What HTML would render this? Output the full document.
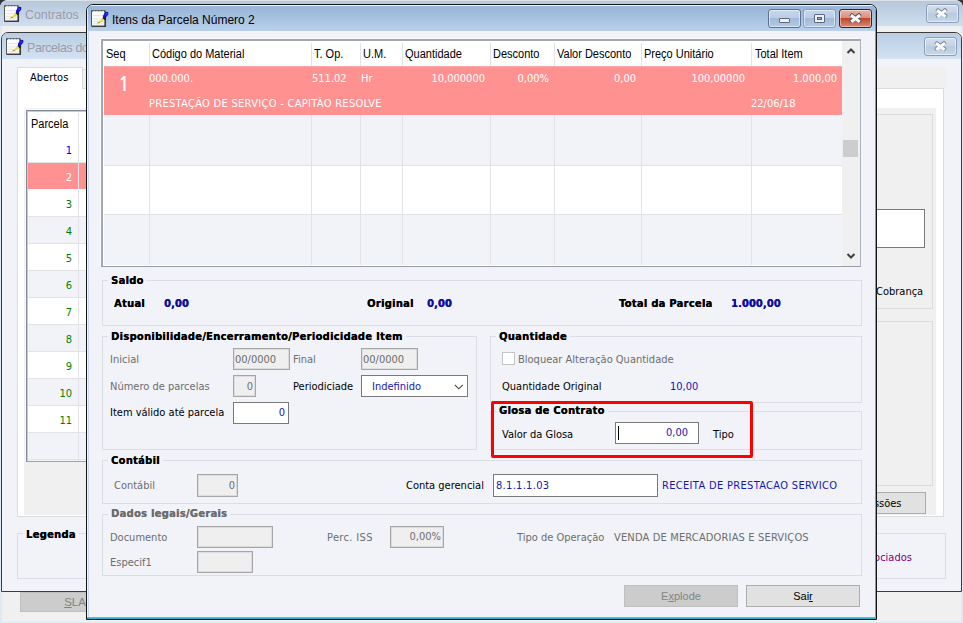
<!DOCTYPE html>
<html lang="pt-BR">
<head>
<meta charset="utf-8">
<title>Itens da Parcela Número 2</title>
<style>
html,body{margin:0;padding:0;}
body{width:963px;height:623px;overflow:hidden;position:relative;background:#33363c;
  font-family:"DejaVu Sans Condensed","Liberation Sans",sans-serif;font-size:11px;color:#000;}
*{box-sizing:border-box;}
.a{position:absolute;white-space:nowrap;}
.t{position:absolute;white-space:nowrap;line-height:14px;height:14px;}
.b{font-weight:bold;letter-spacing:0.3px;text-shadow:.3px 0 0 currentColor;}
.ms{font-family:"Liberation Sans",sans-serif;font-size:12.5px;transform:scaleX(.88);transform-origin:0 50%;}
.seg{font-family:"Liberation Sans",sans-serif;font-size:12px;}
.blue{color:#1616b0;}
.b.blue{letter-spacing:0.1px;color:#0e0e9c;}
.gray{color:#6d6d6d;}
.r{text-align:right;}
/* outer window */
#w1{left:0;top:0;width:963px;height:623px;background:#dfe9f5;border-radius:8px 8px 0 0;overflow:hidden;}
#w1t{left:0;top:0;width:963px;height:26px;background:linear-gradient(#b7c8dc,#cfdff0);border-top:1px solid #dde2e9;border-top-left-radius:7px;border-top-right-radius:7px;}
#w1m{left:2px;top:26px;width:959px;height:596px;background:#f0f0f0;}
/* second window */
#w2{left:1px;top:32px;width:961px;height:560px;background:#f1f3f9;border:1px solid #3c3c3c;border-radius:7px 7px 0 0;overflow:hidden;}
#w2t{left:0;top:0;width:959px;height:26px;background:linear-gradient(#b9cde3,#d3e2f2);}
.cb2{background:linear-gradient(#c5d6eb,#bacee6 48%,#a0bad9 50%,#b4cbe5) !important;border-color:#8397b8;}
.cbtn{border:1px solid #8e9cbb;border-radius:3px;background:linear-gradient(#d2deec,#c3d2e5 50%,#b9cbe0 50%,#c8d7e8);box-shadow:inset 0 0 0 1px rgba(255,255,255,.5);}
/* dialog */
#dlg{left:86px;top:4px;width:791px;height:616px;background:#f1f3f9;border:1px solid #141414;border-radius:7px 7px 0 0;overflow:hidden;}
#dlgt{left:0;top:0;width:789px;height:26px;background:linear-gradient(#98b4d6 0%,#a7c2e1 50%,#b9d1ec 100%);border-top:1px solid #eef3f9;border-left:1px solid #dfeaf6;}
.gb{position:absolute;border:1px solid #dcdee6;}
.gl{position:absolute;white-space:nowrap;line-height:14px;height:14px;background:#f1f3f9;padding:0 3px 0 3px;font-weight:bold;letter-spacing:0.3px;text-shadow:.3px 0 0 currentColor;}
.in{position:absolute;border:1px solid #7a7a7a;background:#fff;line-height:18px;padding:0 3px;white-space:nowrap;overflow:hidden;}
.dis{background:#efefef;border:1px solid #a6a6a6;box-shadow:inset 0 0 0 1px #dcdcdc;color:#6d6d6d;}
.btn{position:absolute;border:1px solid #adadad;background:#e1e1e1;text-align:center;line-height:20px;font-family:"Liberation Sans",sans-serif;font-size:11px;}
.x{position:absolute;width:12px;height:10px;}
.x i{position:absolute;left:50%;top:50%;display:block;}
.x .o{width:12.6px;height:4.4px;margin:-2.2px 0 0 -6.3px;background:currentColor;border-radius:1px;}
.x .w{width:10.8px;height:2.6px;margin:-1.3px 0 0 -5.4px;background:#fbfbfb;}
.x .r1{transform:rotate(37deg);}
.x .r2{transform:rotate(-37deg);}
.vl{position:absolute;width:1px;background:#e3e3e6;}
.hl{position:absolute;height:1px;background:#e3e3e6;}
</style>
</head>
<body>
<div class="a" id="w1">
  <div class="a" id="w1t"></div>
  <div class="a" id="w1m"></div>
  <svg class="a" style="left:4px;top:5px" width="18" height="18" viewBox="0 0 18 18"><rect x="0.5" y="0.8" width="13.6" height="15.4" fill="#fbfbfb" stroke="#555" stroke-width="1"/><path d="M1 1h13" stroke="#444" stroke-width="1.2" stroke-dasharray="1.2 1.8"/><path d="M2 2.3h11" stroke="#fff" stroke-width="1.4"/><path d="M1.5 5.6h12M1.5 8.8h12M1.5 11.4h12M1.5 13.8h12" stroke="#e4e4e4" stroke-width="1"/><path d="M14.3 1.5V16.6" stroke="#3c3c3c" stroke-width="1.5"/><path d="M1 16.4h14" stroke="#3c3c3c" stroke-width="1.3"/><path d="M5.8 13.6L11.6 8.2l2 1.9-4.6 2.6z" fill="#e6df3c"/><path d="M5.8 13.6l2.4-1.9 1 .9z" fill="#8c8a2a"/><path d="M11.4 8l1.5-1.7 2.4 2.1-1.5 1.8z" fill="#1c1c24"/><ellipse cx="14.7" cy="4.8" rx="3.5" ry="1.9" transform="rotate(-52 14.7 4.8)" fill="#1212d6"/><ellipse cx="15.2" cy="4.2" rx="1.4" ry="0.7" transform="rotate(-52 15.2 4.2)" fill="#3a3af0"/></svg>
  <div class="t seg" style="left:25px;top:8px;color:#9b9ba6;font-size:12.4px">Contratos</div>
  <div class="a cbtn" style="left:926px;top:4px;width:33px;height:19px"></div>
  <div class="x" style="left:935px;top:8px;color:#7f899f"><i class="o r1"></i><i class="o r2"></i><i class="w r1"></i><i class="w r2"></i></div>
  <div class="btn" style="left:20px;top:592px;width:110px;height:20px;line-height:18px;background:#cccccc;border-color:#bfbfbf;color:#838383;font-size:11.5px"><u>S</u>LA</div>
</div>

<div class="a" id="w2">
  <div class="a" id="w2t"></div>
  <svg class="a" style="left:4px;top:5px" width="18" height="18" viewBox="0 0 18 18"><rect x="0.5" y="0.8" width="13.6" height="15.4" fill="#fbfbfb" stroke="#555" stroke-width="1"/><path d="M1 1h13" stroke="#444" stroke-width="1.2" stroke-dasharray="1.2 1.8"/><path d="M2 2.3h11" stroke="#fff" stroke-width="1.4"/><path d="M1.5 5.6h12M1.5 8.8h12M1.5 11.4h12M1.5 13.8h12" stroke="#e4e4e4" stroke-width="1"/><path d="M14.3 1.5V16.6" stroke="#3c3c3c" stroke-width="1.5"/><path d="M1 16.4h14" stroke="#3c3c3c" stroke-width="1.3"/><path d="M5.8 13.6L11.6 8.2l2 1.9-4.6 2.6z" fill="#e6df3c"/><path d="M5.8 13.6l2.4-1.9 1 .9z" fill="#8c8a2a"/><path d="M11.4 8l1.5-1.7 2.4 2.1-1.5 1.8z" fill="#1c1c24"/><ellipse cx="14.7" cy="4.8" rx="3.5" ry="1.9" transform="rotate(-52 14.7 4.8)" fill="#1212d6"/><ellipse cx="15.2" cy="4.2" rx="1.4" ry="0.7" transform="rotate(-52 15.2 4.2)" fill="#3a3af0"/></svg>
  <div class="t seg" style="left:25px;top:8px;color:#9b9ba6;font-size:12.4px;letter-spacing:-.35px">Parcelas do Contrato</div>
  <div class="a cbtn" style="left:922px;top:4px;width:33px;height:19px"></div>
  <div class="x" style="left:932px;top:8px;color:#7f899f"><i class="o r1"></i><i class="o r2"></i><i class="w r1"></i><i class="w r2"></i></div>
  <!-- tab control -->
  <div class="a" style="left:80px;top:36px;width:700px;height:20px;background:#f0f0f0;border:1px solid #d9d9d9"></div>
  <div class="a" style="left:800px;top:34px;width:145px;height:22px;background:#f0f0f0"></div>
  <div class="a" style="left:15px;top:55px;width:927px;height:429px;background:#fff;border:1px solid #dcdcdc"></div>
  <div class="a" style="left:15px;top:34px;width:66px;height:22px;background:#fff;border:1px solid #dcdcdc;border-bottom:none"></div>
  <div class="t" style="left:28px;top:38px">Abertos</div>
  <div class="a" style="left:22px;top:75px;width:912px;height:407px;background:#f0f0f0"></div>
  <!-- parcela grid -->
  <div class="a" style="left:24px;top:77px;width:840px;height:352px;background:#fff;border:1px solid #838b99;border-right-color:#cfd2da;border-bottom-color:#9ba1ad;box-shadow:inset 1px 1px 0 #c4c9d2,-1px -1px 0 #fafafa"></div>
  <div class="t ms" style="left:29px;top:84px">Parcela</div>
  <div class="a" style="left:26px;top:130px;width:59px;height:26px;background:#ff9191"></div>
  <div class="a" style="left:26px;top:184px;width:59px;height:26px;background:#f2f3f9"></div>
  <div class="a" style="left:26px;top:238px;width:59px;height:26px;background:#f2f3f9"></div>
  <div class="a" style="left:26px;top:292px;width:59px;height:26px;background:#f2f3f9"></div>
  <div class="a" style="left:26px;top:346px;width:59px;height:26px;background:#f2f3f9"></div>
  <div class="a" style="left:26px;top:400px;width:59px;height:28px;background:#f2f3f9"></div>
  <div class="hl" style="left:26px;top:129px;width:59px"></div>
  <div class="hl" style="left:26px;top:183px;width:59px"></div>
  <div class="hl" style="left:26px;top:210px;width:59px"></div>
  <div class="hl" style="left:26px;top:237px;width:59px"></div>
  <div class="hl" style="left:26px;top:264px;width:59px"></div>
  <div class="hl" style="left:26px;top:291px;width:59px"></div>
  <div class="hl" style="left:26px;top:318px;width:59px"></div>
  <div class="hl" style="left:26px;top:345px;width:59px"></div>
  <div class="hl" style="left:26px;top:372px;width:59px"></div>
  <div class="hl" style="left:26px;top:399px;width:59px"></div>
  <div class="hl" style="left:26px;top:426px;width:59px"></div>
  <div class="vl" style="left:76px;top:80px;height:348px;background:#e4e4e8"></div>
  <div class="t r" style="left:40px;width:30px;top:111px;color:#0000ff">1</div>
  <div class="t r" style="left:40px;width:30px;top:138px;color:#fff">2</div>
  <div class="t r" style="left:40px;width:30px;top:165px;color:#008000">3</div>
  <div class="t r" style="left:40px;width:30px;top:192px;color:#008000">4</div>
  <div class="t r" style="left:40px;width:30px;top:219px;color:#008000">5</div>
  <div class="t r" style="left:40px;width:30px;top:246px;color:#008000">6</div>
  <div class="t r" style="left:40px;width:30px;top:273px;color:#008000">7</div>
  <div class="t r" style="left:40px;width:30px;top:300px;color:#008000">8</div>
  <div class="t r" style="left:40px;width:30px;top:327px;color:#008000">9</div>
  <div class="t r" style="left:40px;width:30px;top:354px;color:#008000">10</div>
  <div class="t r" style="left:40px;width:30px;top:381px;color:#008000">11</div>
  <!-- legenda -->
  <div class="gb" style="left:15px;top:500px;width:929px;height:46px"></div>
  <div class="gl" style="left:21px;top:495px;background:#f1f3f9">Legenda</div>
  <div class="t" style="left:855px;top:518px;color:#800080">Associados</div>
  <!-- right side of second window -->
  <div class="a" style="left:800px;top:81px;width:131px;height:195px;border:1px solid #dcdcdc"></div>
  <div class="a" style="left:800px;top:288px;width:131px;height:165px;border:1px solid #dcdcdc"></div>
  <div class="a" style="left:800px;top:176px;width:123px;height:39px;background:#fff;border:1px solid #7a7a7a"></div>
  <div class="t" style="left:874px;top:252px">Cobrança</div>
  <div class="btn" style="left:835px;top:459px;width:89px;height:22px;line-height:22px;font-family:inherit">Sessões</div>
</div>

<!-- front dialog -->
<div class="a" id="dlg">
    <div class="a" id="dlgt"></div>
    <div class="a" style="left:1px;top:26px;width:1px;height:586px;background:#c6d9f1"></div>
    <div class="a" style="left:788px;top:0;width:1px;height:614px;background:#2bbde0"></div>
    <div class="a" style="left:0;top:612px;width:789px;height:2px;background:linear-gradient(#5fcde8,#18a6cc)"></div>
    <div class="a" id="c" style="left:-87px;top:-5px;width:963px;height:623px">
      <svg class="a" style="left:91px;top:10px" width="18" height="18" viewBox="0 0 18 18"><rect x="0.5" y="0.8" width="13.6" height="15.4" fill="#fbfbfb" stroke="#555" stroke-width="1"/><path d="M1 1h13" stroke="#444" stroke-width="1.2" stroke-dasharray="1.2 1.8"/><path d="M2 2.3h11" stroke="#fff" stroke-width="1.4"/><path d="M1.5 5.6h12M1.5 8.8h12M1.5 11.4h12M1.5 13.8h12" stroke="#e4e4e4" stroke-width="1"/><path d="M14.3 1.5V16.6" stroke="#3c3c3c" stroke-width="1.5"/><path d="M1 16.4h14" stroke="#3c3c3c" stroke-width="1.3"/><path d="M5.8 13.6L11.6 8.2l2 1.9-4.6 2.6z" fill="#e6df3c"/><path d="M5.8 13.6l2.4-1.9 1 .9z" fill="#8c8a2a"/><path d="M11.4 8l1.5-1.7 2.4 2.1-1.5 1.8z" fill="#1c1c24"/><ellipse cx="14.7" cy="4.8" rx="3.5" ry="1.9" transform="rotate(-52 14.7 4.8)" fill="#1212d6"/><ellipse cx="15.2" cy="4.2" rx="1.4" ry="0.7" transform="rotate(-52 15.2 4.2)" fill="#3a3af0"/></svg>
      <div class="t seg" style="left:112px;top:12px;line-height:16px;height:16px">Itens da Parcela Número 2</div>
      <!-- caption buttons -->
      <div class="a cbtn cb2" style="left:768px;top:9px;width:33px;height:19px;border-color:#60708f"></div>
      <div class="a" style="left:779px;top:18px;width:11px;height:5px;background:#f0f0f0;border:1px solid #5d6880;border-radius:1px"></div>
      <div class="a cbtn cb2" style="left:803px;top:9px;width:33px;height:19px"></div>
      <div class="a" style="left:814px;top:14px;width:11px;height:9px;border:1px solid #5d6880;background:#f0f0f0;border-radius:1px"></div>
      <div class="a" style="left:817px;top:17px;width:5px;height:3px;border:1px solid #4f5a74;background:#9fb6d6"></div>
      <div class="a" style="left:839px;top:9px;width:33px;height:19px;border:1px solid #4b1a26;border-radius:3px;background:linear-gradient(#eab3a6,#da8f7e 47%,#c2472a 50%,#d98a72);box-shadow:inset 0 0 0 1px rgba(255,255,255,.45)"></div>
      <div class="x" style="left:849px;top:13px;color:#4d566b"><i class="o r1"></i><i class="o r2"></i><i class="w r1"></i><i class="w r2"></i></div>
      <!-- items grid -->
      <div class="a" style="left:101px;top:39px;width:760px;height:228px;background:#fff;border:2px solid #a2a7b4;border-right:1px solid #aeb3be;border-bottom:1px solid #969ca8;box-shadow:-1px -1px 0 #fbfcfe"></div>
      <div class="a" style="left:104px;top:66px;width:738px;height:49px;background:#ff9191;border-top:1px solid #ffa8a8"></div>
      <div class="a" style="left:104px;top:115px;width:738px;height:50px;background:#f2f3f9"></div>
      <div class="hl" style="left:104px;top:165px;width:738px"></div>
      <div class="hl" style="left:104px;top:214px;width:738px"></div>
      <div class="a" style="left:104px;top:215px;width:738px;height:50px;background:#f2f3f9"></div>
      <div class="vl" style="left:149px;top:43px;height:23px"></div>
      <div class="vl" style="left:311px;top:43px;height:23px"></div>
      <div class="vl" style="left:360px;top:43px;height:23px"></div>
      <div class="vl" style="left:402px;top:43px;height:23px"></div>
      <div class="vl" style="left:490px;top:43px;height:23px"></div>
      <div class="vl" style="left:554px;top:43px;height:23px"></div>
      <div class="vl" style="left:641px;top:43px;height:23px"></div>
      <div class="vl" style="left:751px;top:43px;height:23px"></div>
      <div class="vl" style="left:149px;top:115px;height:150px"></div>
      <div class="vl" style="left:311px;top:115px;height:150px"></div>
      <div class="vl" style="left:360px;top:115px;height:150px"></div>
      <div class="vl" style="left:402px;top:115px;height:150px"></div>
      <div class="vl" style="left:490px;top:115px;height:150px"></div>
      <div class="vl" style="left:554px;top:115px;height:150px"></div>
      <div class="vl" style="left:641px;top:115px;height:150px"></div>
      <div class="vl" style="left:751px;top:115px;height:150px"></div>
      <div class="t ms" style="left:106px;top:47px">Seq</div>
      <div class="t ms" style="left:152px;top:47px">Código do Material</div>
      <div class="t ms" style="left:314px;top:47px">T. Op.</div>
      <div class="t ms" style="left:363px;top:47px">U.M.</div>
      <div class="t ms" style="left:405px;top:47px">Quantidade</div>
      <div class="t ms" style="left:493px;top:47px">Desconto</div>
      <div class="t ms" style="left:557px;top:47px">Valor Desconto</div>
      <div class="t ms" style="left:644px;top:47px">Preço Unitário</div>
      <div class="t ms" style="left:755px;top:47px">Total Item</div>
      <div class="a" id="big1" style="left:113px;top:73px;width:22px;height:24px;line-height:24px;font-family:'NanumGothic','Liberation Sans',sans-serif;font-weight:bold;font-size:19px;color:#fff;text-align:center">1</div>
      <div class="t" style="left:149px;top:72px;color:#fff">000.000.</div>
      <div class="t" style="left:149px;top:97px;color:#fff;letter-spacing:.3px">PRESTAÇÃO DE SERVIÇO - CAPITÃO RESOLVE</div>
      <div class="t" style="left:312px;top:72px;color:#fff">511.02</div>
      <div class="t" style="left:361px;top:72px;color:#fff">Hr</div>
      <div class="t r" style="left:404px;width:81px;top:72px;color:#fff">10,000000</div>
      <div class="t r" style="left:492px;width:57px;top:72px;color:#fff">0,00%</div>
      <div class="t r" style="left:556px;width:80px;top:72px;color:#fff">0,00</div>
      <div class="t r" style="left:644px;width:101px;top:72px;color:#fff">100,00000</div>
      <div class="t r" style="left:754px;width:83px;top:72px;color:#fff">1.000,00</div>
      <div class="t" style="left:751px;top:97px;color:#fff">22/06/18</div>
      <!-- scrollbar -->
      <div class="a" style="left:842px;top:41px;width:18px;height:225px;background:#f0f0f0"></div>
      <div class="a" style="left:843px;top:140px;width:15px;height:17px;background:#cdcdcd"></div>
      <svg class="a" style="left:846px;top:47px" width="10" height="8" viewBox="0 0 10 8"><path d="M1.5 6l3.5-3.5 3.5 3.5" fill="none" stroke="#404040" stroke-width="2"/></svg>
      <svg class="a" style="left:846px;top:252px" width="10" height="8" viewBox="0 0 10 8"><path d="M1.5 2l3.5 3.5 3.5-3.5" fill="none" stroke="#404040" stroke-width="2"/></svg>
      <!-- Saldo -->
      <div class="gb" style="left:102px;top:280px;width:760px;height:46px"></div>
      <div class="gl" style="left:108px;top:274px">Saldo</div>
      <div class="t b" style="left:114px;top:297px">Atual</div>
      <div class="t b blue" style="left:164px;top:297px">0,00</div>
      <div class="t b" style="left:367px;top:297px">Original</div>
      <div class="t b blue" style="left:427px;top:297px">0,00</div>
      <div class="t b" style="left:619px;top:297px">Total da Parcela</div>
      <div class="t b blue" style="left:731px;top:297px">1.000,00</div>
      <!-- Disponibilidade -->
      <div class="gb" style="left:102px;top:336px;width:375px;height:114px"></div>
      <div class="gl" style="left:108px;top:330px">Disponibilidade/Encerramento/Periodicidade Item</div>
      <div class="t gray" style="left:110px;top:353px">Inicial</div>
      <div class="in dis" style="left:233px;top:348px;width:57px;height:22px;padding-left:1px;line-height:21px">00/0000</div>
      <div class="t gray" style="left:293px;top:353px">Final</div>
      <div class="in dis" style="left:361px;top:348px;width:57px;height:22px;padding-left:1px;line-height:21px">00/0000</div>
      <div class="t gray" style="left:110px;top:380px">Número de parcelas</div>
      <div class="in dis r" style="left:233px;top:375px;width:23px;height:22px;padding-right:2px;line-height:21px">0</div>
      <div class="t" style="left:293px;top:380px">Periodiciade</div>
      <div class="in blue" style="left:361px;top:375px;width:107px;height:22px;padding-left:10px;line-height:21px">Indefinido</div>
      <svg class="a" style="left:454px;top:384px" width="10" height="7" viewBox="0 0 10 7"><path d="M0.8 0.8l4 4 4-4" fill="none" stroke="#444" stroke-width="1.1"/></svg>
      <div class="t" style="left:110px;top:406px">Item válido até parcela</div>
      <div class="in blue r" style="left:233px;top:402px;width:56px;height:22px;line-height:20px">0</div>
      <!-- Quantidade -->
      <div class="gb" style="left:490px;top:336px;width:372px;height:67px"></div>
      <div class="gl" style="left:496px;top:330px">Quantidade</div>
      <div class="a" style="left:502px;top:352px;width:13px;height:13px;background:#fff;border:1px solid #c4c4c4"></div>
      <div class="t gray" style="left:518px;top:353px">Bloquear Alteração Quantidade</div>
      <div class="t" style="left:502px;top:380px">Quantidade Original</div>
      <div class="t blue" style="left:670px;top:380px">10,00</div>
      <!-- Glosa -->
      <div class="gb" style="left:490px;top:411px;width:372px;height:39px"></div>
      <div class="gl" style="left:496px;top:404px">Glosa de Contrato</div>
      <div class="t" style="left:502px;top:428px">Valor da Glosa</div>
      <div class="in blue r" style="left:615px;top:422px;width:84px;height:22px;line-height:20px;padding-right:10px">0,00</div>
      <div class="a" style="left:618px;top:426px;width:1px;height:14px;background:#000"></div>
      <div class="t" style="left:713px;top:428px">Tipo</div>
      <div class="a" style="left:491px;top:401px;width:262px;height:57px;border:3px solid #ff0000;border-radius:2px"></div>
      <!-- Contabil -->
      <div class="gb" style="left:102px;top:460px;width:760px;height:44px"></div>
      <div class="gl" style="left:108px;top:454px">Contábil</div>
      <div class="t gray" style="left:114px;top:479px">Contábil</div>
      <div class="in dis r" style="left:197px;top:474px;width:41px;height:23px;line-height:21px;padding-right:2px">0</div>
      <div class="t" style="left:406px;top:479px">Conta gerencial</div>
      <div class="in blue" style="left:493px;top:474px;width:165px;height:23px;line-height:21px;padding-left:2px;letter-spacing:.3px">8.1.1.1.03</div>
      <div class="t blue" style="left:662px;top:479px;letter-spacing:.33px">RECEITA DE PRESTACAO SERVICO</div>
      <!-- Dados legais -->
      <div class="gb" style="left:102px;top:514px;width:760px;height:62px"></div>
      <div class="gl gray" style="left:108px;top:507px">Dados legais/Gerais</div>
      <div class="t gray" style="left:110px;top:531px">Documento</div>
      <div class="in dis" style="left:197px;top:526px;width:76px;height:22px"></div>
      <div class="t gray" style="left:327px;top:531px;letter-spacing:.35px">Perc. ISS</div>
      <div class="in dis r" style="left:390px;top:526px;width:54px;height:22px;line-height:20px;padding-right:2px">0,00%</div>
      <div class="t gray" style="left:517px;top:531px">Tipo de Operação</div>
      <div class="t gray" style="left:614px;top:531px;letter-spacing:.16px">VENDA DE MERCADORIAS E SERVIÇOS</div>
      <div class="t gray" style="left:110px;top:556px">Especif1</div>
      <div class="in dis" style="left:197px;top:551px;width:56px;height:22px"></div>
      <!-- buttons -->
      <div class="btn" style="left:624px;top:585px;width:114px;height:22px;background:#cccccc;border-color:#bfbfbf;color:#838383">E<u>x</u>plode</div>
      <div class="btn" style="left:746px;top:585px;width:114px;height:22px">Sai<u>r</u></div>
    </div>
</div>


</body>
</html>
